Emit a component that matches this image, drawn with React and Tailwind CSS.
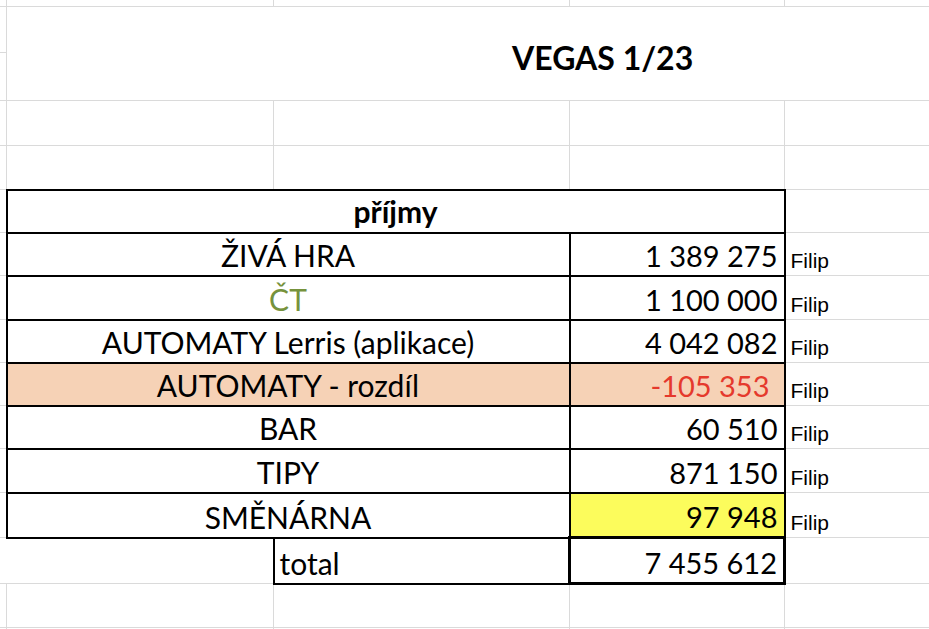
import React from "react";

const grid = "border border-[#dadada]";
const rows = [
  { label: "ŽIVÁ HRA", value: "1 389 275", h: "h-[43px]" },
  { label: "ČT", value: "1 100 000", h: "h-[44px]", labelClass: "text-[#76923c]" },
  { label: "AUTOMATY Lerris (aplikace)", value: "4 042 082", h: "h-[43px]" },
  {
    label: "AUTOMATY - rozdíl",
    value: "-105 353",
    h: "h-[43px]",
    bg: "bg-[#f6d2b6]",
    valueClass: "text-[#e5392c] pr-[14px]",
  },
  { label: "BAR", value: "60 510", h: "h-[43px]" },
  { label: "TIPY", value: "871 150", h: "h-[44px]" },
  { label: "SMĚNÁRNA", value: "97 948", h: "h-[45px]", valueBg: "bg-[#fcfc5c]" },
];

const App = () => {
  return (
    <div className="w-[929px] h-[629px] bg-white overflow-hidden font-['Lato','Liberation_Sans',sans-serif] text-black">
      <table className="border-collapse table-fixed w-[1000px] -mt-px -ml-px">
        <colgroup>
          <col className="w-[7px]" />
          <col className="w-[267px]" />
          <col className="w-[296px]" />
          <col className="w-[215px]" />
          <col className="w-[215px]" />
        </colgroup>
        <tbody>
          <tr className="h-[7px]">
            <td className={grid}></td>
            <td className={grid}></td>
            <td className={grid}></td>
            <td className={grid}></td>
            <td className={grid}></td>
          </tr>
          <tr className="h-[46px]">
            <td className={grid}></td>
            <td
              colSpan={4}
              rowSpan={2}
              className={`${grid} align-top pl-[505px] pt-[35px] text-[32px] font-bold leading-none`}
            >
              VEGAS 1/23
            </td>
          </tr>
          <tr className="h-[48px]">
            <td className={grid}></td>
          </tr>
          {["h-[45px]", "h-[44px]"].map((h) => (
            <tr key={h} className={h}>
              <td className={grid}></td>
              <td className={grid}></td>
              <td className={grid}></td>
              <td className={grid}></td>
              <td className={grid}></td>
            </tr>
          ))}
          <tr className="h-[43px]">
            <td className={grid}></td>
            <td
              colSpan={3}
              className="border-2 border-black text-center align-bottom pb-[6px] text-[30px] font-bold leading-none"
            >
              příjmy
            </td>
            <td className={grid}></td>
          </tr>
          {rows.map((r) => (
            <tr key={r.label} className={`${r.h} ${r.bg ?? ""}`}>
              <td className={`${grid} bg-white`}></td>
              <td
                colSpan={2}
                className={`border-2 border-black text-center align-bottom pb-[5px] text-[30px] leading-none ${r.labelClass ?? ""}`}
              >
                {r.label}
              </td>
              <td
                className={`border-2 border-black text-right align-bottom pb-[5px] pr-[6px] text-[29px] leading-none ${r.valueBg ?? ""} ${r.valueClass ?? ""}`}
              >
                {r.value}
              </td>
              <td className={`${grid} bg-white align-bottom pl-[5px] pb-[4px] text-[21px] leading-none font-['Liberation_Sans',sans-serif]`}>
                Filip
              </td>
            </tr>
          ))}
          <tr className="h-[46px]">
            <td className="border-0"></td>
            <td className="border-0"></td>
            <td className="border-2 border-black align-bottom pl-[5px] pb-[5px] text-[30px] leading-none">
              total
            </td>
            <td className="border-[3px] border-black text-right align-bottom pb-[5px] pr-[6px] text-[29px] leading-none">
              7 455 612
            </td>
            <td className={grid}></td>
          </tr>
          {["h-[44px]", "h-[44px]"].map((h, i) => (
            <tr key={i} className={h}>
              <td className={grid}></td>
              <td className={grid}></td>
              <td className={grid}></td>
              <td className={grid}></td>
              <td className={grid}></td>
            </tr>
          ))}
        </tbody>
      </table>
    </div>
  );
};

export default App;
